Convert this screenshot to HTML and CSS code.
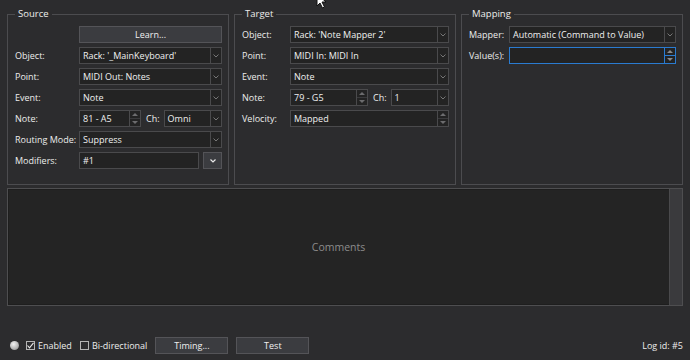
FILE: index.html
```html
<!DOCTYPE html>
<html lang="en">
<head>
  <meta charset="UTF-8">
  <meta name="viewport" content="width=device-width, initial-scale=1.0">
  <title>Binding Editor</title>
  <link rel="stylesheet" href="styles.css">
</head>
<body>

<div class="window">
  <div class="panels">
    <fieldset class="group source">
      <legend>Source</legend>
      <div class="form">
        <span></span>
        <button class="btn">Learn...</button>

        <label>Object:</label>
        <div class="combo"><span class="val">Rack: '_MainKeyboard'</span><span class="arrow"><svg width="6" height="4" viewBox="0 0 6 4"><polyline points="0.5,0.5 3,3 5.5,0.5" fill="none" stroke="#767676" stroke-width="1"/></svg></span></div>

        <label>Point:</label>
        <div class="combo"><span class="val">MIDI Out: Notes</span><span class="arrow"><svg width="6" height="4" viewBox="0 0 6 4"><polyline points="0.5,0.5 3,3 5.5,0.5" fill="none" stroke="#767676" stroke-width="1"/></svg></span></div>

        <label>Event:</label>
        <div class="combo"><span class="val">Note</span><span class="arrow"><svg width="6" height="4" viewBox="0 0 6 4"><polyline points="0.5,0.5 3,3 5.5,0.5" fill="none" stroke="#767676" stroke-width="1"/></svg></span></div>

        <label>Note:</label>
        <div class="split">
          <div class="spin note-src"><span class="val">81 - A5</span><span class="steps"><span class="up"></span><span class="down"></span></span></div>
          <label class="ch">Ch:</label>
          <div class="combo grow"><span class="val">Omni</span><span class="arrow"><svg width="6" height="4" viewBox="0 0 6 4"><polyline points="0.5,0.5 3,3 5.5,0.5" fill="none" stroke="#767676" stroke-width="1"/></svg></span></div>
        </div>

        <label>Routing Mode:</label>
        <div class="combo"><span class="val">Suppress</span><span class="arrow"><svg width="6" height="4" viewBox="0 0 6 4"><polyline points="0.5,0.5 3,3 5.5,0.5" fill="none" stroke="#767676" stroke-width="1"/></svg></span></div>

        <label>Modifiers:</label>
        <div class="split">
          <div class="field grow"><span class="val">#1</span></div>
          <button class="btn menu"><svg width="6" height="4" viewBox="0 0 6 4"><polyline points="0.5,0.5 3,3 5.5,0.5" fill="none" stroke="#e8e8e8" stroke-width="1.2"/></svg></button>
        </div>
      </div>
    </fieldset>

    <fieldset class="group target">
      <legend>Target</legend>
      <div class="form">
        <label>Object:</label>
        <div class="combo"><span class="val">Rack: 'Note Mapper 2'</span><span class="arrow"><svg width="6" height="4" viewBox="0 0 6 4"><polyline points="0.5,0.5 3,3 5.5,0.5" fill="none" stroke="#767676" stroke-width="1"/></svg></span></div>

        <label>Point:</label>
        <div class="combo"><span class="val">MIDI In: MIDI In</span><span class="arrow"><svg width="6" height="4" viewBox="0 0 6 4"><polyline points="0.5,0.5 3,3 5.5,0.5" fill="none" stroke="#767676" stroke-width="1"/></svg></span></div>

        <label>Event:</label>
        <div class="combo"><span class="val">Note</span><span class="arrow"><svg width="6" height="4" viewBox="0 0 6 4"><polyline points="0.5,0.5 3,3 5.5,0.5" fill="none" stroke="#767676" stroke-width="1"/></svg></span></div>

        <label>Note:</label>
        <div class="split">
          <div class="spin note-dst"><span class="val">79 - G5</span><span class="steps"><span class="up"></span><span class="down"></span></span></div>
          <label class="ch">Ch:</label>
          <div class="combo grow"><span class="val">1</span><span class="arrow"><svg width="6" height="4" viewBox="0 0 6 4"><polyline points="0.5,0.5 3,3 5.5,0.5" fill="none" stroke="#767676" stroke-width="1"/></svg></span></div>
        </div>

        <label>Velocity:</label>
        <div class="spin"><span class="val">Mapped</span><span class="steps"><span class="up"></span><span class="down"></span></span></div>
      </div>
    </fieldset>

    <fieldset class="group mapping">
      <legend>Mapping</legend>
      <div class="form">
        <label>Mapper:</label>
        <div class="combo"><span class="val">Automatic (Command to Value)</span><span class="arrow"><svg width="6" height="4" viewBox="0 0 6 4"><polyline points="0.5,0.5 3,3 5.5,0.5" fill="none" stroke="#767676" stroke-width="1"/></svg></span></div>

        <label>Value(s):</label>
        <div class="spin focus"><span class="val"></span><span class="steps"><span class="up"></span><span class="down"></span></span></div>
      </div>
    </fieldset>
  </div>

  <div class="comments">
    <div class="comments-text">Comments</div>
    <div class="scroll"></div>
  </div>

  <div class="bottom">
    <span class="led"></span>
    <label class="check"><span class="box on"><svg width="9" height="9" viewBox="0 0 9 9"><polyline points="1.5,4.5 3.5,6.8 7.5,1.8" fill="none" stroke="#e8e8e8" stroke-width="1.1"/></svg></span>Enabled</label>
    <label class="check"><span class="box"></span>Bi-directional</label>
    <button class="btn wide">Timing...</button>
    <button class="btn wide">Test</button>
    <span class="log">Log id: #5</span>
  </div>

  <svg class="cursor" width="12" height="16" viewBox="0 0 12 16"><path d="M1 1 L1 13 L4 10 L6.5 15 L8.5 14 L6 9 L10 9 Z" fill="#fff" stroke="#111" stroke-width="1"/></svg>
</div>

</body>
</html>
```

FILE: styles.css
```css
body {
  margin: 0;
  background: #2c2c2e;
  font-family: "Open Sans", "Noto Sans", sans-serif;
  font-size: 9px;
  color: #ececec;
}

.window {
  position: relative;
  width: 690px;
  height: 360px;
  box-sizing: border-box;
  padding: 8px 7px 0 7px;
  overflow: hidden;
}

.panels {
  display: grid;
  grid-template-columns: repeat(3, 1fr);
  gap: 5px;
  height: 177px;
}

.group {
  margin: 0;
  min-width: 0;
  border: 1px solid #4c4c4f;
  padding: 6px 6px 0 7px;
}

.group legend {
  padding: 0 3px;
  font-size: 9.5px;
  line-height: 12px;
  color: #ececec;
}

.form {
  display: grid;
  grid-template-columns: 64px 1fr;
  grid-auto-rows: 17px;
  row-gap: 4px;
  align-items: center;
}

.target .form {
  grid-template-columns: 48px 1fr;
}

.mapping .form {
  grid-template-columns: 40px 1fr;
}

.form > label {
  white-space: nowrap;
  color: #ececec;
}

.combo, .spin, .field {
  display: flex;
  height: 17px;
  box-sizing: border-box;
  border: 1px solid #4a4a4c;
  background: #232323;
  align-items: stretch;
  min-width: 0;
}

.val {
  flex: 1;
  padding-left: 3px;
  line-height: 15px;
  white-space: nowrap;
  overflow: hidden;
  color: #f0f0f0;
}

.arrow {
  width: 10px;
  border-left: 1px solid #4a4a4c;
  display: flex;
  align-items: center;
  justify-content: center;
}

.steps {
  width: 10px;
  border-left: 1px solid #4a4a4c;
  display: flex;
  flex-direction: column;
}

.steps span {
  flex: 1;
  display: flex;
  align-items: center;
  justify-content: center;
}

.steps .up {
  border-bottom: 1px solid #3a3a3c;
}

.steps .up::before {
  content: "";
  border-left: 3px solid transparent;
  border-right: 3px solid transparent;
  border-bottom: 3px solid #6c6c6e;
}

.steps .down::before {
  content: "";
  border-left: 3px solid transparent;
  border-right: 3px solid transparent;
  border-top: 3px solid #6c6c6e;
}

.spin.focus {
  border-color: #2a7bd0;
}

.spin.focus .steps {
  border-left-color: #2a7bd0;
}

.spin.focus .up {
  border-bottom-color: #2a7bd0;
}

.spin.focus .steps span::before {
  border-bottom-color: #8a8a8c;
  border-top-color: #8a8a8c;
}

.split {
  display: flex;
  align-items: center;
  height: 17px;
}

.grow {
  flex: 1;
}

.note-src {
  width: 62px;
}

.note-dst {
  width: 78px;
}

.ch {
  margin: 0 4px 0 5px;
  color: #ececec;
}

.btn {
  height: 17px;
  box-sizing: border-box;
  border: 1px solid #545458;
  background: #3b3c40;
  color: #f0f0f0;
  font-family: inherit;
  font-size: 9px;
  padding: 0;
}

.btn.menu {
  width: 19px;
  margin-left: 4px;
  display: flex;
  align-items: center;
  justify-content: center;
}

.comments {
  margin-top: 3px;
  height: 118px;
  box-sizing: border-box;
  border: 1px solid #4e4e50;
  box-shadow: inset 0 0 0 1px #1e1e1e;
  background: #242424;
  display: flex;
}

.comments-text {
  flex: 1;
  display: flex;
  align-items: center;
  justify-content: center;
  font-size: 10.5px;
  color: #8c8c8c;
}

.scroll {
  width: 12px;
  background: #3a3a3d;
  border-left: 1px solid #4a4a4c;
}

.bottom {
  margin-top: 31px;
  height: 17px;
  display: flex;
  align-items: center;
}

.led {
  width: 9px;
  height: 9px;
  border-radius: 50%;
  margin-left: 3px;
  background: radial-gradient(circle at 40% 35%, #f2f2f2, #b8b8b8 55%, #7a7a7a);
}

.check {
  display: flex;
  align-items: center;
  gap: 3px;
  margin-left: 7px;
  color: #ececec;
}

.check + .check {
  margin-left: 8px;
}

.box {
  width: 9px;
  height: 9px;
  box-sizing: border-box;
  border: 1px solid #b4b4b4;
  display: flex;
  align-items: center;
  justify-content: center;
}

.box svg {
  margin: -1px;
}

.btn.wide {
  width: 73px;
  margin-left: 8px;
}

.log {
  margin-left: auto;
  color: #ececec;
}

.cursor {
  position: absolute;
  left: 316px;
  top: -7px;
}
```
